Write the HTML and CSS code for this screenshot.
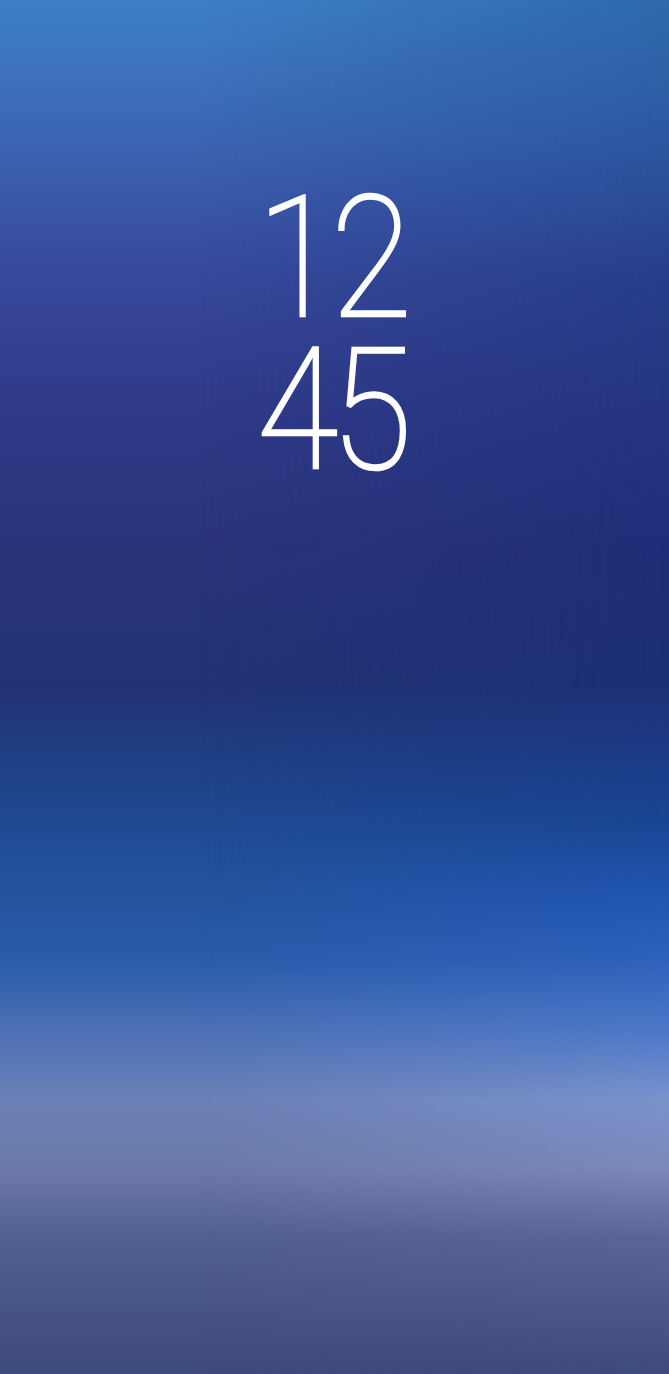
FILE: index.html
```html
<!DOCTYPE html>
<html lang="en">
<head>
<meta charset="utf-8">
<title>Lock screen</title>
<link rel="stylesheet" href="styles.css">
</head>
<body>
<main class="lockscreen">
  <div class="clock">
    <span class="clock-line">12</span>
    <span class="clock-line">45</span>
  </div>
</main>
</body>
</html>
```

FILE: styles.css
```css
html, body {
  margin: 0;
  padding: 0;
  height: 100%;
}

.lockscreen {
  position: relative;
  height: 1374px;
  overflow: hidden;
  background: linear-gradient(to bottom,
    #3d7fc8 0px,
    #3c65b5 137px,
    #37489a 275px,
    #2f3a88 412px,
    #29337a 550px,
    #213274 687px,
    #1f4a92 824px,
    #2a5cab 962px,
    #4d70b5 1030px,
    #6a80b5 1100px,
    #6b78a8 1170px,
    #51608f 1237px,
    #3d4a7c 1374px);
}

.lockscreen::before {
  content: "";
  position: absolute;
  inset: 0;
  background: linear-gradient(to bottom,
    #2f6aac 0px,
    #2c58a0 137px,
    #283e8a 275px,
    #243480 412px,
    #1f2e78 550px,
    #1d3077 687px,
    #1a4694 824px,
    #2055b0 893px,
    #2e62ba 962px,
    #4d78c8 1030px,
    #7a92cc 1100px,
    #7c88b8 1170px,
    #5a6598 1237px,
    #3d4a7c 1374px);
  -webkit-mask-image: linear-gradient(to right, transparent 0%, transparent 30%, #000 100%);
  mask-image: linear-gradient(to right, transparent 0%, transparent 30%, #000 100%);
}

.clock {
  position: relative;
  display: flex;
  flex-direction: column;
  align-items: center;
  padding-top: 183px;
  font-family: Roboto, "Noto Sans", sans-serif;
  font-weight: 100;
  font-size: 168px;
  line-height: 152px;
  color: #ffffff;
  -webkit-text-stroke: 2.6px #ffffff;
}

.clock-line {
  display: block;
  letter-spacing: -8px;
  transform: translateX(-4px) scaleX(0.88);
}
```
